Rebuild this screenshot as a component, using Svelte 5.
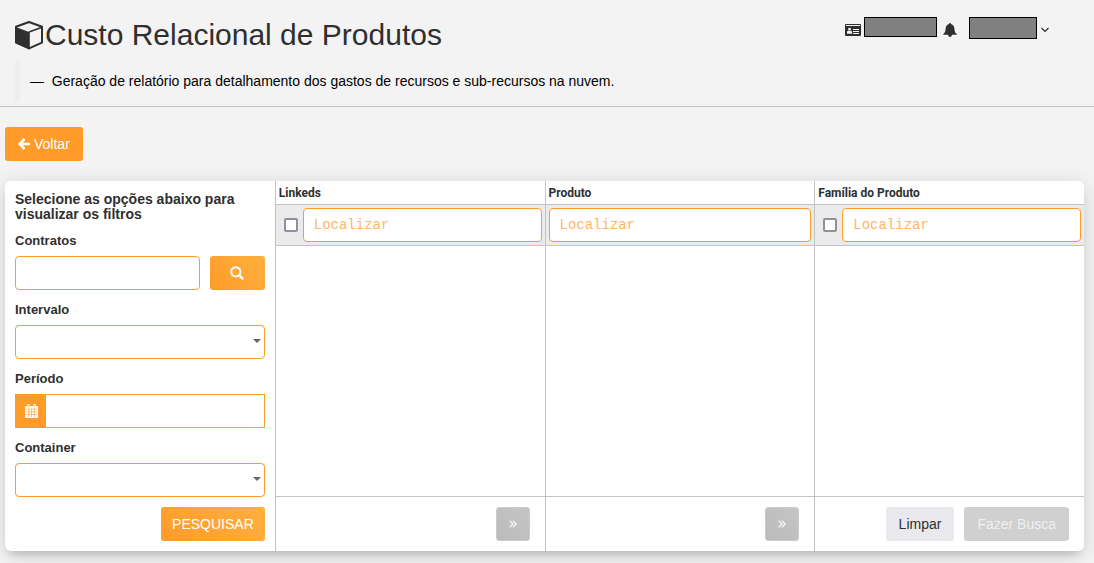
<script>
  const columns = [
    { id: 'linkeds', title: 'Linkeds', check: true },
    { id: 'produto', title: 'Produto', check: false },
    { id: 'familia', title: 'Família do Produto', check: true }
  ];
</script>

<div class="page">
  <header class="top">
    <div class="titles">
      <h1>
        <svg class="cube" viewBox="0 0 30 30" aria-hidden="true">
          <path d="M14 2 27 6.8V22.6L14 28.4 1 22.6V6.8Z" fill="none" stroke="#2f2f2f" stroke-width="2" stroke-linejoin="round" />
          <path d="M0 6.8 14.8 12.3V29.4L.8 23.2Q0 22.8 0 22Z" fill="#2f2f2f" />
          <path d="M14 12 27 7.2" stroke="#2f2f2f" stroke-width="1.6" />
        </svg>
        <span>Custo Relacional de Produtos</span>
      </h1>
      <blockquote>—&nbsp; Geração de relatório para detalhamento dos gastos de recursos e sub-recursos na nuvem.</blockquote>
    </div>
    <div class="user">
      <svg class="card" viewBox="0 0 16 12" aria-hidden="true">
        <rect width="16" height="12" rx="1" fill="#2f2f2f" />
        <path d="M1 1.5H15" stroke="#f2f2f2" stroke-width="1" />
        <circle cx="4.5" cy="5.2" r="1.4" fill="#f2f2f2" />
        <path d="M2 9.8V8Q2 6.8 3.4 6.8H5.6Q7 6.8 7 8V9.8Z" fill="#f2f2f2" />
        <path d="M8 5.5H14M8 7.5H14M8 9.5H14" stroke="#f2f2f2" stroke-width="1" />
      </svg>
      <span class="mask account"></span>
      <svg class="bell" viewBox="0 0 14 14" aria-hidden="true">
        <path d="M7 0Q8 0 8 1Q11.3 2 11.3 5.5Q11.3 9.5 13.7 11V11.8H.3V11Q2.7 9.5 2.7 5.5Q2.7 2 6 1Q6 0 7 0ZM5 11.8H9Q8.6 14 7 14T5 11.8Z" fill="#2f2f2f" />
      </svg>
      <span class="mask name"></span>
      <svg class="chev" viewBox="0 0 8 6" aria-hidden="true"><path d="M.5 1 4 4.5 7.5 1" fill="none" stroke="#2f2f2f" stroke-width="1.2" /></svg>
    </div>
  </header>

  <main>
    <button class="btn back" type="button">
      <svg width="12" height="12" viewBox="0 0 12 12" aria-hidden="true"><path d="M6.5 1 1.7 6 6.5 11M2 6H12" fill="none" stroke="#fff" stroke-width="2.6" /></svg>
      Voltar
    </button>

    <section class="panel">
      <form class="filters">
        <h2>Selecione as opções abaixo para visualizar os filtros</h2>
        <div class="field">
          <label for="contratos">Contratos</label>
          <div class="line">
            <input id="contratos" class="control" type="text" />
            <button class="btn glow find" type="button" aria-label="Buscar">
              <svg width="14" height="14" viewBox="0 0 14 14" aria-hidden="true"><circle cx="5.8" cy="5.8" r="4.6" fill="none" stroke="#fff" stroke-width="2" /><path d="M9.3 9.3 12.6 12.6" stroke="#fff" stroke-width="2.4" stroke-linecap="round" /></svg>
            </button>
          </div>
        </div>
        <div class="field">
          <label for="intervalo">Intervalo</label>
          <div class="select">
            <select id="intervalo" class="control"></select>
          </div>
        </div>
        <div class="field">
          <label for="periodo">Período</label>
          <div class="period">
            <span class="addon">
              <svg width="13" height="14" viewBox="0 0 13 14" aria-hidden="true">
                <path d="M1 2H12Q13 2 13 3V13Q13 14 12 14H1Q0 14 0 13V3Q0 2 1 2Z" fill="#fff" />
                <path d="M2.5 0H4.5V3.5H2.5ZM8.5 0H10.5V3.5H8.5Z" fill="#fff" />
                <path d="M1 5H12M1 7.8H12M1 10.5H12M3.7 5V13M6.5 5V13M9.3 5V13" stroke="#ff9b29" stroke-width=".6" />
                <path d="M3.5 1V3.2M9.5 1V3.2" stroke="#ff9b29" stroke-width=".5" />
              </svg>
            </span>
            <input id="periodo" class="control" type="text" />
          </div>
        </div>
        <div class="field">
          <label for="container">Container</label>
          <div class="select">
            <select id="container" class="control"></select>
          </div>
        </div>
        <button class="btn glow submit" type="button">PESQUISAR</button>
      </form>

      {#each columns as col (col.id)}
        <div class="column">
          <h3>{col.title}</h3>
          <div class="search">
            {#if col.check}
              <input type="checkbox" aria-label="Selecionar {col.title}" />
            {/if}
            <input class="control" type="text" placeholder="Localizar" aria-label="Localizar {col.title}" />
          </div>
          <div class="list"></div>
          <div class="foot">
            {#if col.id === 'familia'}
              <button class="btn clear" type="button">Limpar</button>
              <button class="btn run" type="button" disabled>Fazer Busca</button>
            {:else}
              <button class="btn next" type="button" disabled aria-label="Avançar">
                <svg width="8" height="8" viewBox="0 0 8 8" aria-hidden="true"><path d="M.7.7 4 4 .7 7.3M4 .7 7.3 4 4 7.3" fill="none" stroke="#f4f4f4" stroke-width="1.4" /></svg>
              </button>
            {/if}
          </div>
        </div>
      {/each}
    </section>
  </main>
</div>

<style>
  :global(body) {
    margin: 0;
    background: #f3f3f3;
  }
  .page, .page :global(*) {
    box-sizing: border-box;
  }
  .page {
    font-family: "Liberation Sans", Arial, sans-serif;
    font-size: 14px;
    color: #2f2f2f;
  }
  .top {
    display: flex;
    justify-content: space-between;
    padding: 15px 45px 4px 15px;
    border-bottom: 1px solid #c3c3c3;
  }
  h1 {
    display: flex;
    align-items: center;
    margin: 0 0 6px;
    font-size: 30px;
    font-weight: 400;
    line-height: 40px;
  }
  .cube {
    width: 30px;
    height: 30px;
  }
  blockquote {
    margin: 0;
    padding: 10px;
    border-left: 5px solid #eee;
    line-height: 21px;
    color: #000;
  }
  .user {
    display: flex;
    align-items: center;
    height: 26px;
  }
  .card { width: 16px; height: 12px; margin-top: 4px; }
  .bell { width: 14px; height: 14px; margin: 4px 12px 0 6px; }
  .chev { width: 8px; height: 6px; margin: 4px 0 0 4px; }
  .mask {
    border: 1px solid #000;
    background: #808080;
  }
  .account { width: 73px; height: 20px; margin: 0 0 2px 3px; }
  .name { width: 68px; height: 22px; }
  main {
    padding: 20px 10px 12px 5px;
  }
  .btn {
    display: inline-flex;
    align-items: center;
    justify-content: center;
    height: 34px;
    padding: 0 13px;
    border: 0;
    border-radius: 3px;
    font: inherit;
    color: #fff;
  }
  .back {
    gap: 4px;
    background: #ff9b29;
  }
  .glow {
    background: linear-gradient(45deg, #ff9b29, #ffb03f);
  }
  .panel {
    display: grid;
    grid-template-columns: repeat(4, minmax(0, 1fr));
    margin-top: 20px;
    border-radius: 6px;
    background: #fff;
    box-shadow: 0 4px 20px rgba(0, 0, 0, 0.14), 0 7px 10px -5px rgba(0, 0, 0, 0.2);
  }
  .filters {
    display: flex;
    flex-direction: column;
    padding: 11px 10px 10px;
  }
  h2 {
    margin: 0 0 9px;
    font-size: 14px;
    line-height: 15px;
  }
  .field {
    margin-bottom: 10px;
  }
  label {
    display: block;
    margin-bottom: 5px;
    font-size: 13px;
    font-weight: 700;
    line-height: 20px;
  }
  .line {
    display: flex;
    gap: 10px;
  }
  .find { flex: 0 0 55px; }
  .control {
    display: block;
    width: 100%;
    min-width: 0;
    height: 34px;
    margin: 0;
    padding: 0 10px;
    border: 1px solid #ff9b29;
    border-radius: 4px;
    background: #fff;
    font: 14px "Liberation Mono", monospace;
    color: #ff9b29;
    appearance: none;
  }
  .control::placeholder {
    color: #ffb566;
    opacity: 1;
  }
  .select {
    position: relative;
  }
  .select::after {
    content: "";
    position: absolute;
    right: 4px;
    top: 14px;
    border: 4px solid transparent;
    border-top-color: #666;
    border-bottom: 0;
    pointer-events: none;
  }
  .period {
    display: flex;
  }
  .period .control {
    border-radius: 0;
  }
  .addon {
    display: flex;
    flex: 0 0 30px;
    align-items: center;
    justify-content: center;
    padding-left: 2px;
    background: #ff9b29;
  }
  .submit {
    align-self: flex-end;
    padding: 0 11px;
  }
  .column {
    display: flex;
    flex-direction: column;
    border-left: 1px solid #c3c3c3;
  }
  h3 {
    margin: 0;
    padding: 1px 3px 0;
    font-family: Roboto, sans-serif;
    font-size: 12px;
    line-height: 22px;
  }
  .search {
    display: flex;
    align-items: center;
    padding: 3px;
    border: solid #c3c3c3;
    border-width: 1px 0;
    background: #ebebeb;
  }
  .search input[type="checkbox"] {
    flex: none;
    width: 14px;
    height: 14px;
    margin: 0 5px;
    border: 2px solid #8f8f9d;
    border-radius: 2px;
    background: #fff;
    appearance: none;
  }
  .list {
    flex: 1;
  }
  .foot {
    display: flex;
    justify-content: flex-end;
    gap: 10px;
    padding: 10px 15px;
    border-top: 1px solid #c3c3c3;
  }
  .clear {
    background: #e9e9ed;
    color: #2f2f2f;
  }
  .run {
    background: #d0d0d0;
    color: #efefef;
  }
  .next {
    width: 34px;
    padding: 0;
    border: 1px solid #cbcbcb;
    background: linear-gradient(45deg, #bbb, #c5c5c5);
  }
</style>
